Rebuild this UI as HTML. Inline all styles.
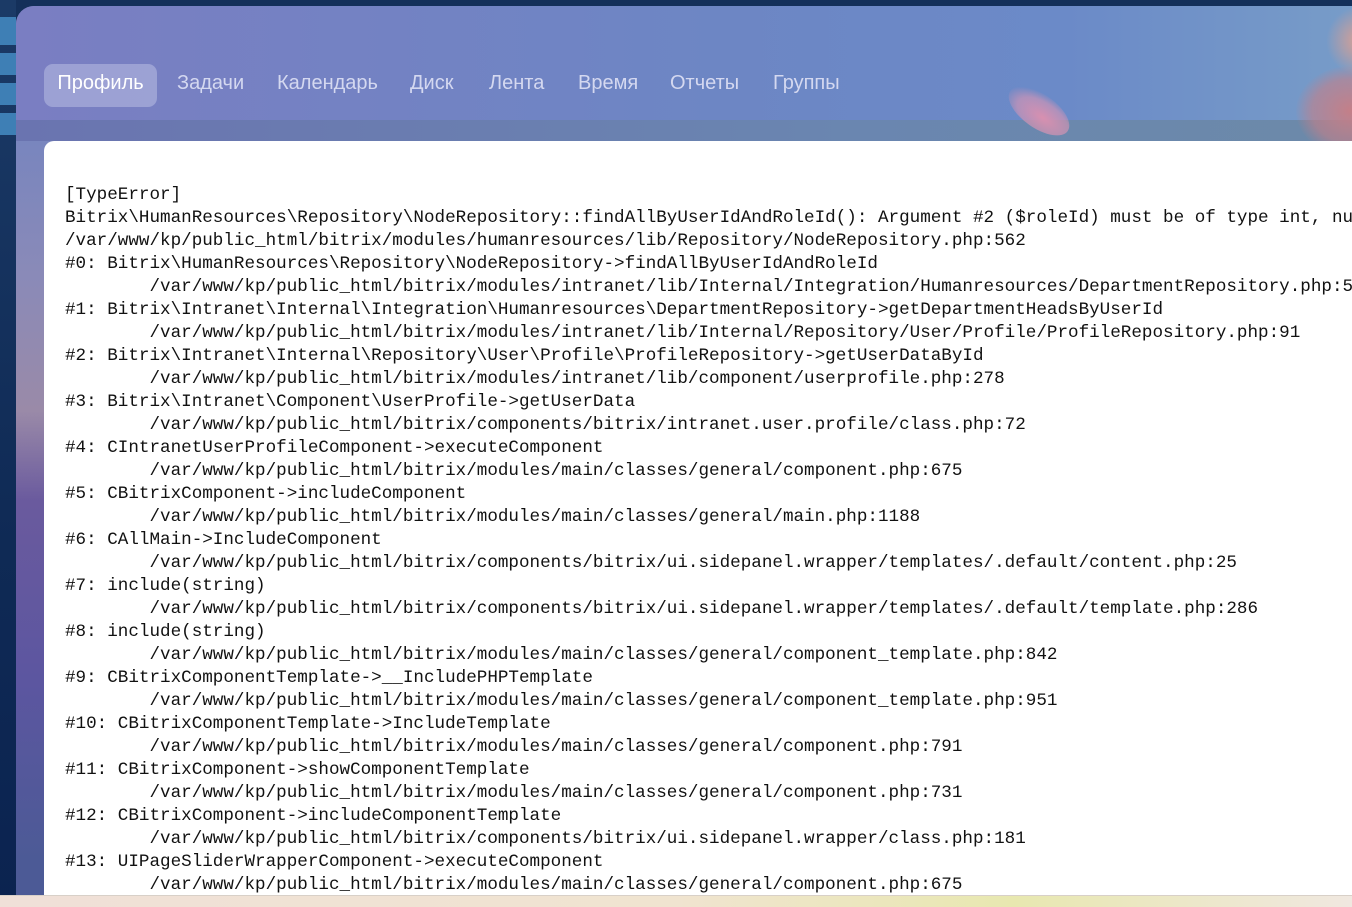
<!DOCTYPE html>
<html><head><meta charset="utf-8"><style>
html,body{margin:0;padding:0;width:1352px;height:906px;overflow:hidden;background:#14305a;}
.side{position:absolute;left:0;top:0;width:16px;height:906px;background:linear-gradient(#1b3a66,#0f2a55 60%,#0b2350);}
.blk{position:absolute;left:0;width:16px;background:#3e7fb5;}
.panel{position:absolute;left:16px;top:6px;width:1400px;height:900px;border-top-left-radius:18px;overflow:hidden;
background:linear-gradient(180deg,#7a7cbe 0%,#7384c0 10%,#8a8ab8 30%,#9a8aa8 45%,#6a5a9e 55%,#5c56a0 75%,#4c5a96 95%);}
.head{position:absolute;left:0;top:0;width:100%;height:114px;background:linear-gradient(90deg,#7a7ec2 0%,#6d86c4 50%,#6b8ac8 75%,#7aa0c8 100%);}
.band{position:absolute;left:0;top:114px;width:100%;height:21px;background:linear-gradient(90deg,#6a74b0,#6a86b0 60%,#6c8aa8);}
.petal1{position:absolute;left:988px;top:88px;width:70px;height:34px;border-radius:50%;background:radial-gradient(ellipse at 60% 60%,#d890b0,rgba(220,150,180,0.6) 50%,rgba(220,140,170,0) 75%);transform:rotate(35deg);}
.petal2{position:absolute;left:1280px;top:60px;width:110px;height:90px;border-radius:50%;background:radial-gradient(#c47f88,rgba(196,127,136,0.6) 50%,rgba(200,130,140,0) 72%);}
.petal3{position:absolute;left:1310px;top:0px;width:70px;height:70px;border-radius:50%;background:radial-gradient(#e0a090,rgba(224,160,144,0) 70%);}
.tab{position:absolute;top:58px;height:43px;font:20px "Liberation Sans",sans-serif;line-height:39px;color:#d4d8f0;}
.sel{left:28px;width:113px;background:rgba(200,205,235,0.45);border-radius:9px;color:#fff;text-align:center;}
.card{position:absolute;left:44px;top:141px;width:1320px;height:754px;background:#fff;border-top-left-radius:10px;overflow:hidden;}
pre{margin:0;position:absolute;left:21px;top:43px;font:17.6px/23px "Liberation Mono",monospace;color:#111;white-space:pre;}
.bottom{position:absolute;left:0;top:895px;width:1352px;height:11px;background:linear-gradient(90deg,#f0e0d8,#f0e4d0 50%,#e8e8b0 75%,#f0e8e0);border-top:1px solid #d8d0c8;}
</style></head><body>
<div class="side"></div>
<div class="blk" style="top:17px;height:28px"></div>
<div class="blk" style="top:53px;height:22px"></div>
<div class="blk" style="top:83px;height:22px"></div>
<div class="blk" style="top:113px;height:22px"></div>
<div class="panel">
<div class="head"></div><div class="band"></div>
<div class="petal1"></div><div class="petal2"></div><div class="petal3"></div>
<div class="tab sel">Профиль</div>
<div class="tab" style="left:161px">Задачи</div>
<div class="tab" style="left:261px">Календарь</div>
<div class="tab" style="left:394px">Диск</div>
<div class="tab" style="left:473px">Лента</div>
<div class="tab" style="left:562px">Время</div>
<div class="tab" style="left:654px">Отчеты</div>
<div class="tab" style="left:757px">Группы</div>
</div>
<div class="card"><pre>[TypeError]
Bitrix\HumanResources\Repository\NodeRepository::findAllByUserIdAndRoleId(): Argument #2 ($roleId) must be of type int, null given
/var/www/kp/public_html/bitrix/modules/humanresources/lib/Repository/NodeRepository.php:562
#0: Bitrix\HumanResources\Repository\NodeRepository-&gt;findAllByUserIdAndRoleId
        /var/www/kp/public_html/bitrix/modules/intranet/lib/Internal/Integration/Humanresources/DepartmentRepository.php:58
#1: Bitrix\Intranet\Internal\Integration\Humanresources\DepartmentRepository-&gt;getDepartmentHeadsByUserId
        /var/www/kp/public_html/bitrix/modules/intranet/lib/Internal/Repository/User/Profile/ProfileRepository.php:91
#2: Bitrix\Intranet\Internal\Repository\User\Profile\ProfileRepository-&gt;getUserDataById
        /var/www/kp/public_html/bitrix/modules/intranet/lib/component/userprofile.php:278
#3: Bitrix\Intranet\Component\UserProfile-&gt;getUserData
        /var/www/kp/public_html/bitrix/components/bitrix/intranet.user.profile/class.php:72
#4: CIntranetUserProfileComponent-&gt;executeComponent
        /var/www/kp/public_html/bitrix/modules/main/classes/general/component.php:675
#5: CBitrixComponent-&gt;includeComponent
        /var/www/kp/public_html/bitrix/modules/main/classes/general/main.php:1188
#6: CAllMain-&gt;IncludeComponent
        /var/www/kp/public_html/bitrix/components/bitrix/ui.sidepanel.wrapper/templates/.default/content.php:25
#7: include(string)
        /var/www/kp/public_html/bitrix/components/bitrix/ui.sidepanel.wrapper/templates/.default/template.php:286
#8: include(string)
        /var/www/kp/public_html/bitrix/modules/main/classes/general/component_template.php:842
#9: CBitrixComponentTemplate-&gt;__IncludePHPTemplate
        /var/www/kp/public_html/bitrix/modules/main/classes/general/component_template.php:951
#10: CBitrixComponentTemplate-&gt;IncludeTemplate
        /var/www/kp/public_html/bitrix/modules/main/classes/general/component.php:791
#11: CBitrixComponent-&gt;showComponentTemplate
        /var/www/kp/public_html/bitrix/modules/main/classes/general/component.php:731
#12: CBitrixComponent-&gt;includeComponentTemplate
        /var/www/kp/public_html/bitrix/components/bitrix/ui.sidepanel.wrapper/class.php:181
#13: UIPageSliderWrapperComponent-&gt;executeComponent
        /var/www/kp/public_html/bitrix/modules/main/classes/general/component.php:675</pre></div>
<div class="bottom"></div>
</body></html>
